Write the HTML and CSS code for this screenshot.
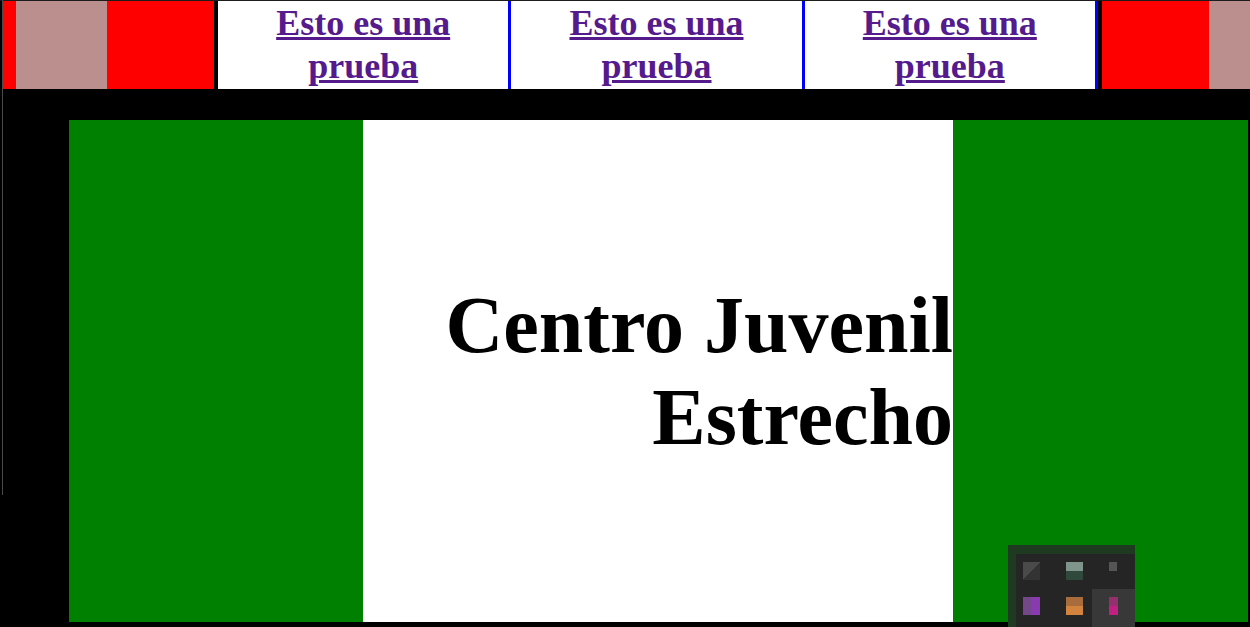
FILE: index.html
```html
<!DOCTYPE html>
<html lang="es">
<head>
<meta charset="utf-8">
<title>Centro Juvenil Estrecho</title>
<link rel="stylesheet" href="styles.css">
</head>
<body>
<div class="page">
  <header class="top">
    <div class="side side-left"><div class="chip"></div></div>
    <nav class="nav">
      <div class="cell"><a class="link" href="#">Esto es una prueba</a></div>
      <div class="cell"><a class="link" href="#">Esto es una prueba</a></div>
      <div class="cell"><a class="link" href="#">Esto es una prueba</a></div>
    </nav>
    <div class="side side-right"><div class="chip chip-right"></div></div>
  </header>
  <main class="banner">
    <div class="band"></div>
    <div class="center">
      <h1 class="title">Centro Juvenil Estrecho</h1>
    </div>
    <div class="band"></div>
  </main>
</div>
<div class="widget">
  <span class="px p8"></span>
  <span class="px p4"></span>
  <span class="px p1"></span>
  <span class="px p2"></span>
  <span class="px p3"></span>
  <span class="px p5"></span>
  <span class="px p6"></span>
  <span class="px p7"></span>
</div>
</body>
</html>
```
FILE: styles.css
```css
html, body {
  margin: 0;
  padding: 0;
  background: #000;
  height: 100%;
  overflow: hidden;
}
body {
  font-family: "Liberation Serif", "Times New Roman", serif;
  position: relative;
}
.page {
  border-top: 1px solid #1c1c1c;
  padding-left: 2px;
}
.page::before {
  content: "";
  position: absolute;
  left: 2px;
  top: 0;
  width: 1px;
  height: 495px;
  background: #4a4a4a;
}
.top {
  display: flex;
  height: 88px;
  margin-left: 1px;
}
.side {
  background: #ff0000;
  height: 88px;
  display: flex;
}
.side-left {
  width: 211px;
  padding-left: 13px;
  box-sizing: border-box;
}
.chip {
  width: 91px;
  height: 88px;
  background: #bc8f8f;
}
.side-right {
  width: 148px;
  margin-left: 4px;
  justify-content: flex-end;
}
.chip-right {
  width: 41px;
}
.nav {
  width: 880px;
  margin-left: 4px;
  background: #fff;
  display: flex;
}
.cell {
  flex: 1;
  border-right: 3px solid #0000ff;
  display: flex;
  align-items: center;
  justify-content: center;
  text-align: center;
}
.link {
  color: #551a8b;
  font-weight: bold;
  font-size: 36px;
  line-height: 43px;
  text-decoration: underline;
  padding: 0 20px;
}
.banner {
  display: flex;
  margin: 31px 0 0 67px;
  width: 1179px;
  height: 502px;
}
.band {
  background: #008000;
  width: 294px;
}
.band:last-child {
  width: 295px;
}
.center {
  flex: 1;
  background: #fff;
  display: flex;
  align-items: center;
  justify-content: flex-end;
}
.title {
  margin: 0;
  font-size: 80px;
  line-height: 92px;
  font-weight: bold;
  text-align: right;
  color: #000;
  width: 520px;
}
.widget {
  position: absolute;
  left: 1008px;
  top: 545px;
  width: 127px;
  height: 82px;
  background: #252525;
  box-shadow: inset 8px 9px 0 #1e3a20;
}
.px {
  position: absolute;
  display: block;
}
.p1 { left: 15px; top: 17px; width: 17px; height: 18px; background: linear-gradient(135deg, #4a4a4a 50%, #333 50%); }
.p2 { left: 58px; top: 17px; width: 17px; height: 18px; background: linear-gradient(180deg, #7f948a 50%, #2f4a3c 50%); }
.p3 { left: 101px; top: 17px; width: 8px; height: 9px; background: #555; }
.p4 { left: 84px; top: 44px; width: 43px; height: 38px; background: #383838; }
.p5 { left: 15px; top: 52px; width: 17px; height: 18px; background: linear-gradient(90deg, #74478a 50%, #8a3ab0 50%); }
.p6 { left: 58px; top: 52px; width: 17px; height: 18px; background: linear-gradient(180deg, #a96c3c 50%, #d2843e 50%); }
.p7 { left: 101px; top: 52px; width: 9px; height: 18px; background: linear-gradient(180deg, #94306e 50%, #c21f82 50%); }
.p8 { left: 92px; top: 52px; width: 26px; height: 18px; background: #552a5a; }
```
